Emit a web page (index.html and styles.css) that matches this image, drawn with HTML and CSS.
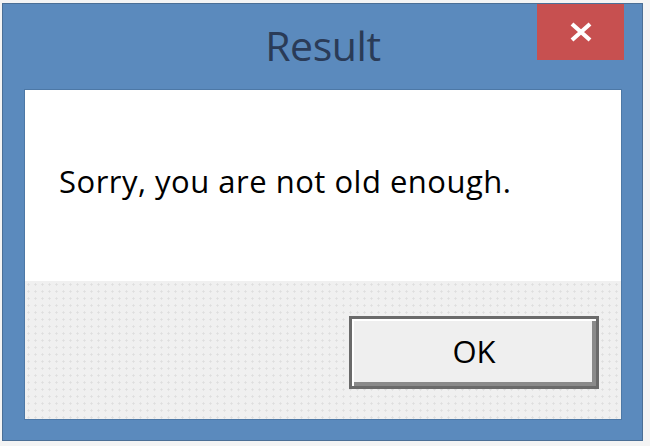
FILE: index.html
```html
<!DOCTYPE html>
<html>
<head>
<meta charset="utf-8">
<link rel="stylesheet" href="styles.css">
</head>
<body>
<div class="dialog">
  <div class="titlebar">
    <div class="title">Result</div>
    <div class="close">
      <svg width="24" height="20" viewBox="0 0 24 20"><path d="M3 2 L21 18 M21 2 L3 18" stroke="#fff" stroke-width="4.2" fill="none"/></svg>
    </div>
  </div>
  <div class="client">
    <div class="content">
      <p class="message">Sorry, you are not old enough.</p>
    </div>
    <div class="footer">
      <button class="ok">OK</button>
    </div>
  </div>
</div>
</body>
</html>
```

FILE: styles.css
```css
html, body {
  margin: 0;
  padding: 0;
}
body {
  width: 650px;
  height: 446px;
  background: #f4f4f4;
  overflow: hidden;
  padding: 3px 0 0 2px;
  box-sizing: border-box;
  font-family: "Open Sans", "Noto Sans", sans-serif;
}
.dialog {
  width: 641px;
  height: 438px;
  box-sizing: border-box;
  background: #5b8abd;
  border: 1px solid #4b6f96;
  display: flex;
  flex-direction: column;
  padding: 0 20px 20px 21px;
}
.titlebar {
  height: 85px;
  flex: none;
  position: relative;
  display: flex;
  justify-content: center;
}
.title {
  font-size: 41px;
  color: #2a3b57;
  line-height: 1;
  margin-top: 21px;
  letter-spacing: -0.4px;
}
.close {
  position: absolute;
  top: 0;
  right: -2px;
  width: 87px;
  height: 56px;
  background: #c75050;
  display: flex;
  align-items: center;
  justify-content: center;
}
.client {
  flex: 1;
  display: flex;
  flex-direction: column;
  border: 1px solid #4d78a6;
  box-sizing: border-box;
}
.content {
  background: #fff;
  height: 191px;
  flex: none;
}
.message {
  margin: 0;
  padding: 76px 0 0 34px;
  font-size: 31px;
  line-height: 1;
  color: #000;
  letter-spacing: 0.5px;
}
.footer {
  flex: 1;
  background-color: #f0f0f0;
  background-image: radial-gradient(circle, #dedede 0.9px, transparent 1.3px);
  background-size: 7px 7px;
  display: flex;
  justify-content: flex-end;
  align-items: flex-end;
  padding: 0 22px 30px 0;
}
.ok {
  width: 250px;
  height: 73px;
  box-sizing: border-box;
  border: 3px solid #6a6a6a;
  background: #efefef;
  box-shadow: inset 2px 2px 0 #fff, inset -4px -4px 0 #8a8a8a;
  font-family: "Open Sans", "Noto Sans", sans-serif;
  font-size: 31px;
  color: #000;
  padding: 0 0 2px;
  line-height: 1;
}
```
